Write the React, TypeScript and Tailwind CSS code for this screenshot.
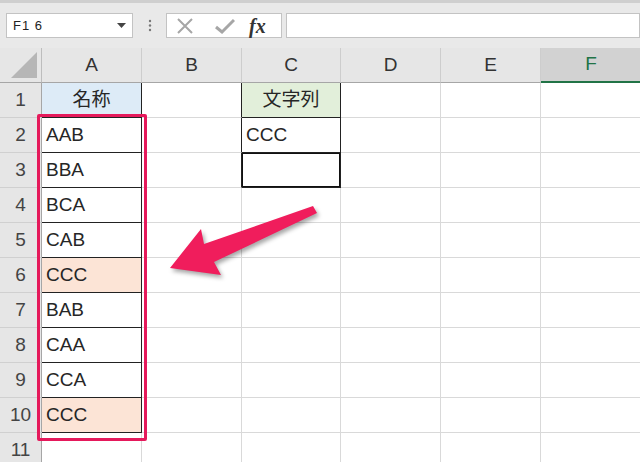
import React from "react";

const cols = ["A", "B", "C", "D", "E", "F"];
const aVals = ["名称", "AAB", "BBA", "BCA", "CAB", "CCC", "BAB", "CAA", "CCA", "CCC", ""];

function cellClass(r: number, c: number): string {
  let cls = "h-[35px] border-r border-b flex items-center overflow-hidden ";
  let right = "border-r-[#d9d9d9] ";
  let bottom = "border-b-[#d9d9d9] ";
  if (c === 0 && r <= 10) {
    right = "border-r-[#222] ";
    bottom = "border-b-[#222] ";
  }
  if (c === 2 && r <= 3) {
    right = "border-r-[#222] ";
    bottom = "border-b-[#222] ";
  }
  if (c === 1 && r <= 3) right = "border-r-[#222] ";
  if (c === 2 && r === 3) cls += "shadow-[inset_0_0_0_1px_#111] ";
  let bg = "bg-white ";
  if (c === 0 && r === 1) bg = "bg-[#ddebf7] ";
  if (c === 0 && (r === 6 || r === 10)) bg = "bg-[#fce4d6] ";
  if (c === 2 && r === 1) bg = "bg-[#e2efda] ";
  return cls + right + bottom + bg;
}

export default function App() {
  const rows = Array.from({ length: 11 }, (_, i) => i + 1);
  return (
    <div
      className="relative w-[640px] h-[462px] overflow-hidden bg-white"
      style={{ fontFamily: '"Liberation Sans", "Noto Sans CJK JP", sans-serif' }}
    >
      {/* formula bar */}
      <div className="h-[48px] bg-[#e9e9e9] border-t-[3px] border-t-[#cfcfcf] flex items-start pt-[10px]">
        <div className="ml-[6px] w-[127px] h-[25px] bg-white border border-[#c3c3c3] flex items-center justify-between px-[6px]">
          <span className="text-[13px] text-[#222] tracking-[1px]">F1 6</span>
          <svg width="9" height="6" viewBox="0 0 9 6">
            <path d="M0 0 L9 0 L4.5 5 Z" fill="#444" />
          </svg>
        </div>
        <div className="w-[33px] h-[25px] flex items-center justify-center">
          <svg width="4" height="13" viewBox="0 0 4 13">
            <circle cx="2" cy="2" r="1.2" fill="#777" />
            <circle cx="2" cy="6.5" r="1.2" fill="#777" />
            <circle cx="2" cy="11" r="1.2" fill="#777" />
          </svg>
        </div>
        <div className="w-[116px] h-[25px] bg-white border border-[#c3c3c3] flex items-center">
          <svg className="ml-[9px]" width="18" height="16" viewBox="0 0 18 16">
            <path d="M2 1 L16 15 M16 1 L2 15" stroke="#a6a6a6" strokeWidth="2" fill="none" />
          </svg>
          <svg className="ml-[21px]" width="20" height="16" viewBox="0 0 20 16">
            <path d="M1 9 L7 14 L19 2" stroke="#a6a6a6" strokeWidth="3" fill="none" />
          </svg>
          <span
            className="ml-[14px] text-[20px] italic font-bold text-[#333] leading-none"
            style={{ fontFamily: '"Liberation Serif", serif' }}
          >
            fx
          </span>
        </div>
        <div className="ml-[4px] flex-1 h-[25px] bg-white border border-[#c3c3c3]" />
      </div>

      {/* sheet grid */}
      <div className="grid grid-cols-[42px_100px_100px_99px_100px_100px_100px]">
        <div className="h-[35px] bg-[#e6e6e6] border-r border-r-[#bdbdbd] border-b border-b-[#a6a6a6] flex items-end justify-end p-[4px]">
          <svg width="26" height="26" viewBox="0 0 26 26">
            <path d="M26 0 L26 26 L0 26 Z" fill="#b6b6b6" />
          </svg>
        </div>
        {cols.map((c) =>
          c === "F" ? (
            <div
              key={c}
              className="h-[35px] bg-[#d2d2d2] border-b-2 border-b-[#217346] flex items-center justify-center text-[19px] text-[#217346]"
            >
              F
            </div>
          ) : (
            <div
              key={c}
              className="h-[35px] bg-[#e6e6e6] border-r border-r-[#cdcdcd] border-b border-b-[#a6a6a6] flex items-center justify-center text-[19px] text-[#333]"
            >
              {c}
            </div>
          )
        )}
        {rows.map((r) => (
          <React.Fragment key={r}>
            <div className="h-[35px] bg-[#e6e6e6] border-r border-r-[#a6a6a6] border-b border-b-[#d0d0d0] flex items-center justify-center text-[19px] text-[#444]">
              {r}
            </div>
            {cols.map((_, c) => {
              let content: React.ReactNode = null;
              let align = "pl-[4px] ";
              if (c === 0) {
                content = aVals[r - 1];
                if (r === 1) align = "justify-center ";
              }
              if (c === 2 && r === 1) {
                content = "文字列";
                align = "justify-center ";
              }
              if (c === 2 && r === 2) content = "CCC";
              return (
                <div
                  key={c}
                  className={cellClass(r, c) + align + "text-[19px] text-[#262626]"}
                >
                  {content}
                </div>
              );
            })}
          </React.Fragment>
        ))}
      </div>

      {/* pink highlight rectangle */}
      <div className="absolute left-[37px] top-[114px] w-[110px] h-[327px] border-[3px] border-[#e5195b] rounded-[2px]" />

      {/* arrow */}
      <svg
        className="absolute left-0 top-0"
        width="640"
        height="462"
        viewBox="0 0 640 462"
        style={{ filter: "drop-shadow(2px 3px 2px rgba(0,0,0,0.35))" }}
      >
        <path
          d="M313 206 L317 213 L214 262 L221 275 L170 268 L201 229 L204 244 Z"
          fill="#f01d5c"
          strokeLinejoin="round"
        />
      </svg>
    </div>
  );
}
